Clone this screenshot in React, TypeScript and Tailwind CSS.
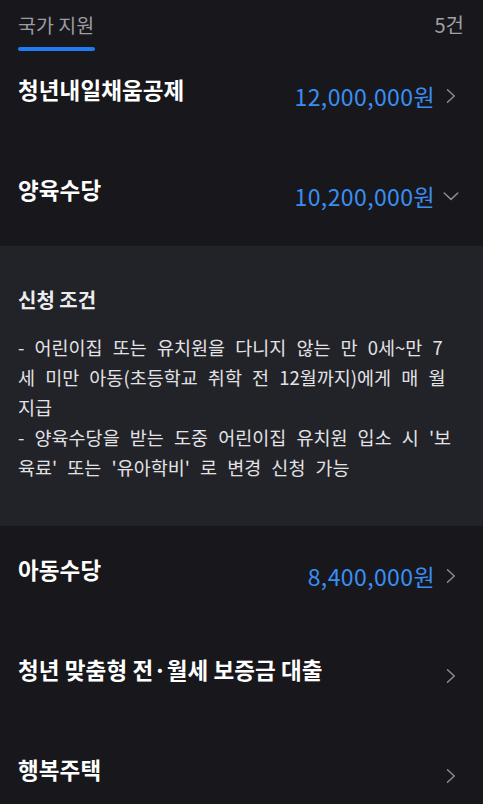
const font = { fontFamily: '"Noto Sans CJK KR", "Noto Sans", sans-serif' };

function ChevronRight() {
  return (
    <svg width="16" height="16" viewBox="0 0 16 16" fill="none" className="shrink-0">
      <path d="M4.5 1.8 L11.3 8 L4.5 14.2" stroke="#8b8b91" strokeWidth="1.5" strokeLinecap="round" strokeLinejoin="round" />
    </svg>
  );
}

function ChevronDown() {
  return (
    <svg width="16" height="16" viewBox="0 0 16 16" fill="none" className="shrink-0">
      <path d="M1.2 5 L8 11.4 L14.8 5" stroke="#8b8b91" strokeWidth="1.5" strokeLinecap="round" strokeLinejoin="round" />
    </svg>
  );
}

type RowProps = {
  title: string;
  amount?: string;
  open?: boolean;
  first?: boolean;
};

function Row({ title, amount, open, first }: RowProps) {
  return (
    <div className={`flex justify-between pl-[18px] pr-[24px] ${first ? "h-[95px]" : "h-[100px]"}`}>
      <div className={`text-[22.5px] font-semibold leading-[30px] tracking-[0.1px] text-white ${first ? "mt-[23px]" : "mt-[28px]"}`}>
        {title}
      </div>
      <div className={`flex h-[30px] items-center ${first ? "mt-[30px]" : "mt-[35px]"}`}>
        {amount && (
          <span className="mr-[8px] text-[23px] leading-[30px] tracking-[0.4px] text-[#3a8ef2]">{amount}</span>
        )}
        {open ? <ChevronDown /> : <ChevronRight />}
      </div>
    </div>
  );
}

const lines = [
  "- 어린이집 또는 유치원을 다니지 않는 만 0세~만 7",
  "세 미만 아동(초등학교 취학 전 12월까지)에게 매 월",
  "지급",
  "- 양육수당을 받는 도중 어린이집 유치원 입소 시 '보",
  "육료' 또는 '유아학비' 로 변경 신청 가능",
];

export default function App() {
  return (
    <div className="h-[804px] w-full overflow-hidden bg-[#18181c]" style={font}>
      <div className="flex h-[51px] items-start justify-between pl-[18px] pr-[19px]">
        <div className="flex h-full flex-col">
          <span className="mt-[12px] text-[19.5px] leading-[26px] text-[#9c9ca2]">국가 지원</span>
          <div className="mt-auto h-[4px] w-[77px] rounded-full bg-[#1f7cf5]" />
        </div>
        <span className="mt-[12px] text-[20px] leading-[26px] text-[#a0a0a6]">5건</span>
      </div>

      <Row first title="청년내일채움공제" amount="12,000,000원" />
      <Row title="양육수당" amount="10,200,000원" open />

      <div className="h-[280px] bg-[#222328] px-[18px] pt-[39px]">
        <div className="text-[20px] font-bold leading-[30px] text-[#ececee]">신청 조건</div>
        <div className="mt-[17px] text-[18.5px] leading-[30px] text-[#e2e2e5] [word-spacing:6px]">
          {lines.map((l) => (
            <div key={l} className="whitespace-nowrap">
              {l}
            </div>
          ))}
        </div>
      </div>

      <Row title="아동수당" amount="8,400,000원" />
      <Row title="청년 맞춤형 전·월세 보증금 대출" />
      <Row title="행복주택" />
    </div>
  );
}
